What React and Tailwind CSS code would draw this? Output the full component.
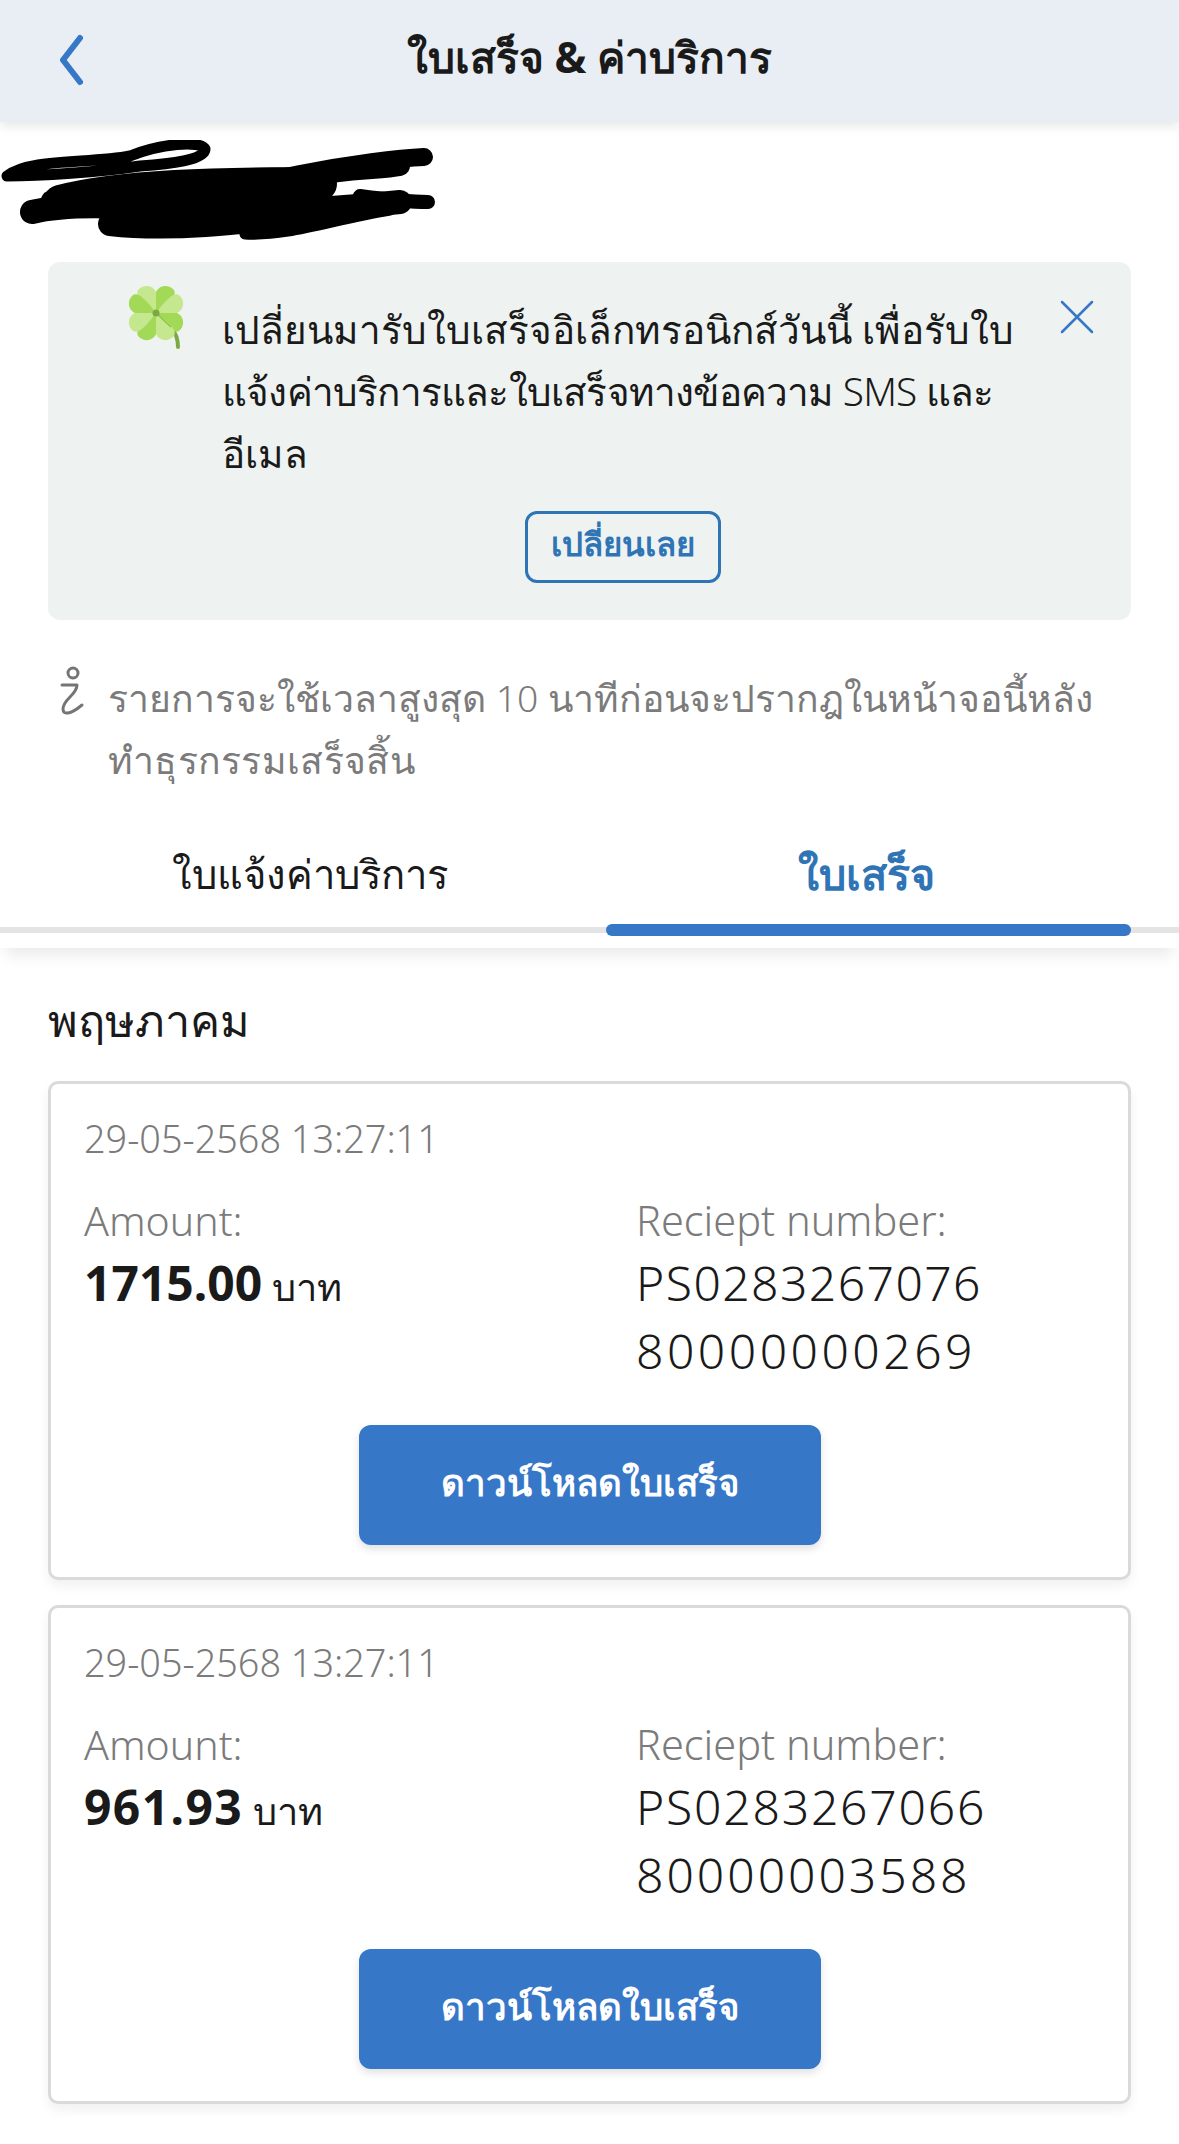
import React from 'react';

const THAI = { fontFamily: '"Noto Sans", "Open Sans", "DejaVu Sans", sans-serif' };

const receipts = [
  {
    id: 1,
    date: '29-05-2568 13:27:11',
    amount: '1715.00',
    amountClass: 'tracking-normal',
    lines: [
      { text: 'PS0283267076', className: 'tracking-[1.45px]' },
      { text: '80000000269', className: 'tracking-[3.5px]' },
    ],
  },
  {
    id: 2,
    date: '29-05-2568 13:27:11',
    amount: '961.93',
    amountClass: 'tracking-[1.4px]',
    lines: [
      { text: 'PS0283267066', className: 'tracking-[1.8px]' },
      { text: '80000003588', className: 'tracking-[3px]' },
    ],
  },
];

const Leaf = ({ angle }) => (
  <g transform={`rotate(${angle} 28 28) translate(28 28)`}>
    <path d="M0 0 L0 -21 C3 -28 12 -29 17 -24 C21 -20 19 -14 0 0 Z" fill="#a2d957" />
    <path d="M0 0 L0 -21 C-3 -28 -12 -29 -17 -24 C-21 -20 -19 -14 0 0 Z" fill="#c5e88e" />
  </g>
);

const Clover = () => (
  <svg viewBox="0 0 57 66" className="w-[57px] h-[66px] shrink-0">
    <path d="M43 42 C48 48 50 54 50 62" fill="none" stroke="#7ea843" strokeWidth="4" strokeLinecap="round" />
    <Leaf angle={0} />
    <Leaf angle={90} />
    <Leaf angle={180} />
    <Leaf angle={270} />
    <path d="M28 28 L43 42" stroke="#8cc63f" strokeWidth="1.5" />
    <circle cx="28" cy="28" r="3.5" fill="#7ea843" />
  </svg>
);

const Scribble = () => (
  <svg viewBox="0 0 435 100" className="w-[435px] h-[100px] block">
    <g fill="none" stroke="#000" strokeLinecap="round" strokeLinejoin="round">
      <path d="M7 36 C30 18 90 24 130 16 C160 4 200 0 205 9 C205 20 170 24 140 26 C100 32 40 36 7 36" strokeWidth="11" />
      <path d="M50 60 C120 40 230 50 300 34 C350 24 400 18 424 17" strokeWidth="18" />
      <path d="M60 62 C120 46 220 44 320 44" strokeWidth="34" />
      <path d="M300 38 C350 28 380 30 400 26" strokeWidth="20" />
      <path d="M360 56 C390 60 410 62 428 62" strokeWidth="14" />
      <path d="M32 72 C80 60 160 70 240 72 C300 72 360 66 400 62" strokeWidth="24" />
      <path d="M110 84 C180 92 260 80 350 70" strokeWidth="24" />
      <path d="M245 94 C290 96 330 80 390 70 C340 76 290 86 245 94" strokeWidth="11" />
    </g>
  </svg>
);

const ReceiptCard = ({ receipt }) => (
  <div className="border-[3px] border-[#dadada] rounded-[10px] bg-white shadow-[0_6px_12px_rgba(0,0,0,0.06)] h-[499px] pl-[33px] pr-[33px] pt-[30px]">
    <div className="text-[37.8px] leading-[50px] text-[#7b7b7b] font-light">{receipt.date}</div>
    <div className="flex mt-[27px]">
      <div className="w-[552px]">
        <div className="text-[41px] leading-[58px] text-[#7b7b7b] font-light">Amount:</div>
        <div className="leading-[68px] text-[#1a1a1a]">
          <span className={`text-[48px] font-bold ${receipt.amountClass}`}>{receipt.amount}</span>
          <span className="text-[38px] font-light"> บาท</span>
        </div>
      </div>
      <div>
        <div className="text-[41.5px] leading-[58px] text-[#7b7b7b] font-light">Reciept number:</div>
        {receipt.lines.map((line) => (
          <div key={line.text} className={`text-[48px] leading-[68px] text-[#1a1a1a] font-light ${line.className}`}>{line.text}</div>
        ))}
      </div>
    </div>
    <div className="flex justify-center mt-[40px]">
      <button className="w-[462px] h-[120px] rounded-[12px] bg-[#3677c8] text-white text-[36.7px] font-semibold pb-[4px] shadow-[0_4px_8px_rgba(0,0,0,0.12)]">
        ดาวน์โหลดใบเสร็จ
      </button>
    </div>
  </div>
);

export default function App() {
  return (
    <div className="w-[1179px] h-[2144px] bg-white overflow-hidden" style={THAI}>
      <header className="relative h-[122px] pb-[8px] bg-[#e9eef4] shadow-[0_4px_10px_rgba(0,0,0,0.1)] flex items-center justify-center">
        <svg viewBox="0 0 30 52" className="absolute left-[56px] top-[34px] w-[30px] h-[52px]">
          <path d="M24 4 L7 26 L24 48" fill="none" stroke="#3677c8" strokeWidth="6" strokeLinecap="round" strokeLinejoin="round" />
        </svg>
        <h1 className="text-[42.5px] font-bold text-[#1a1a1a]">ใบเสร็จ &amp; ค่าบริการ</h1>
      </header>

      <div className="pt-[18px] h-[140px]">
        <Scribble />
      </div>

      <section className="relative mx-[48px] h-[358px] bg-[#eef3f1] rounded-[12px] pt-[23px] pl-[80px]">
        <div className="flex gap-[37px]">
          <Clover />
          <p className="text-[38.7px] leading-[62px] text-[#1a1a1a] font-light whitespace-nowrap pt-[13px]">
            <span className="block">เปลี่ยนมารับใบเสร็จอิเล็กทรอนิกส์วันนี้ เพื่อรับใบ</span>
            <span className="block tracking-[-0.8px]">แจ้งค่าบริการและใบเสร็จทางข้อความ SMS และ</span>
            <span className="block">อีเมล</span>
          </p>
        </div>
        <svg viewBox="0 0 34 34" className="absolute right-[37px] top-[38px] w-[34px] h-[34px]">
          <path d="M2 2 L32 32 M32 2 L2 32" stroke="#3677c8" strokeWidth="2.5" strokeLinecap="round" />
        </svg>
        <button className="absolute left-[477px] top-[249px] w-[196px] h-[72px] pb-[6px] rounded-[12px] border-[3px] border-[#2f74b5] text-[#2f74b5] text-[33px] font-semibold">
          เปลี่ยนเลย
        </button>
      </section>

      <div className="flex mt-[47px] pl-[58px] pr-[40px]">
        <svg viewBox="0 0 28 56" className="w-[28px] h-[56px] shrink-0 -mt-[2px]">
          <circle cx="15" cy="8" r="5" fill="none" stroke="#757575" strokeWidth="3" />
          <path d="M4 20 H19 C19 30 5 34 5 44 C5 50 12 50 24 40" fill="none" stroke="#757575" strokeWidth="3" strokeLinecap="round" strokeLinejoin="round" />
        </svg>
        <p className="ml-[22px] text-[37.3px] leading-[62px] text-[#7b7b7b] font-light whitespace-nowrap">
          <span className="block">รายการจะใช้เวลาสูงสุด 10 นาทีก่อนจะปรากฎในหน้าจอนี้หลัง</span>
          <span className="block tracking-[0.3px]">ทำธุรกรรมเสร็จสิ้น</span>
        </p>
      </div>

      <nav className="relative mt-[35px] h-[122px] shadow-[0_14px_14px_-6px_rgba(0,0,0,0.08)]">
        <div className="flex h-[96px]">
          <div className="w-[620px] text-center text-[40px] leading-[96px] text-[#1a1a1a] font-normal">ใบแจ้งค่าบริการ</div>
          <div className="w-[492px] text-center text-[43px] leading-[96px] text-[#2f74b5] font-semibold">ใบเสร็จ</div>
        </div>
        <div className="absolute left-0 right-0 top-[101px] h-[6px] bg-[#e4e4e4]" />
        <div className="absolute left-[606px] top-[98px] w-[525px] h-[12px] rounded-full bg-[#3677c8]" />
      </nav>

      <main className="px-[48px] pt-[42px]">
        <h2 className="text-[45px] leading-[60px] text-[#1a1a1a] font-light">พฤษภาคม</h2>
        <div className="flex flex-col gap-[25px] mt-[31px]">
          {receipts.map((receipt) => (
            <ReceiptCard key={receipt.id} receipt={receipt} />
          ))}
        </div>
      </main>
    </div>
  );
}
